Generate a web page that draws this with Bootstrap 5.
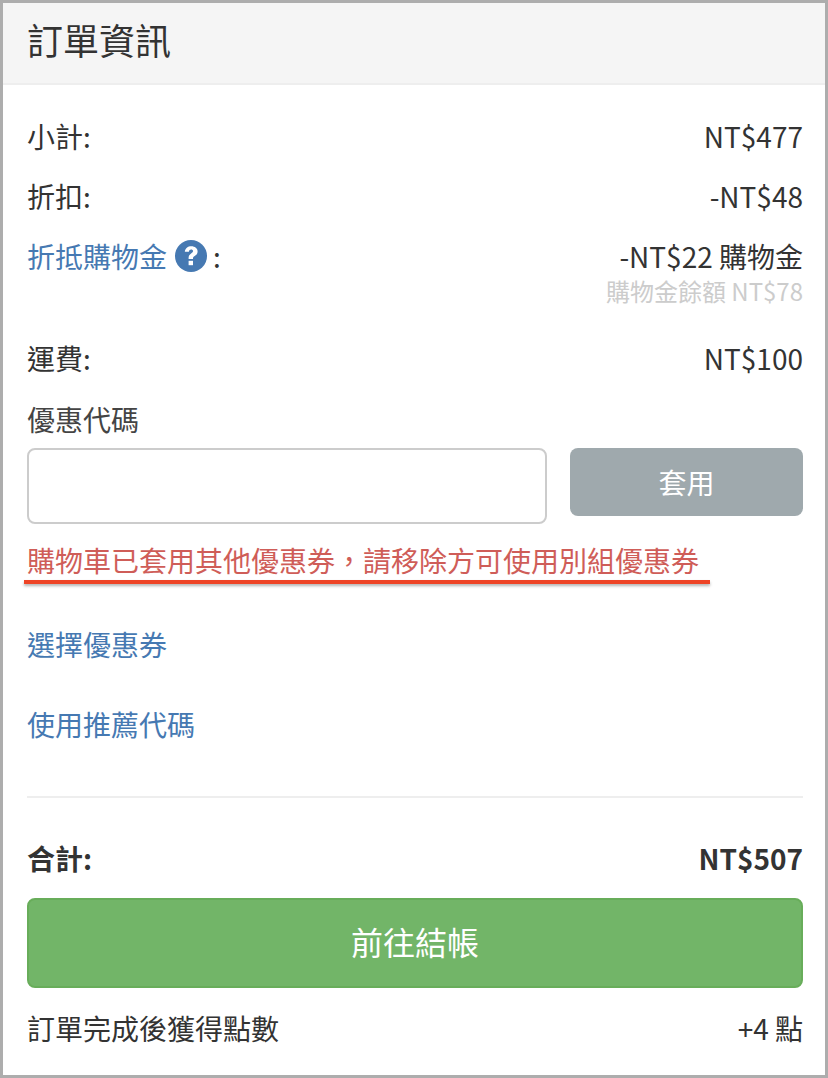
<!DOCTYPE html>
<html lang="zh-Hant">
<head>
<meta charset="utf-8">
<title>訂單資訊</title>
<link rel="stylesheet" href="https://cdn.jsdelivr.net/npm/bootstrap@5.3.0/dist/css/bootstrap.min.css">
<style>
html,body{height:100%;}
body{margin:0;background:#fff;color:#333;font-family:"Noto Sans CJK TC",sans-serif;font-size:28px;line-height:40px;}
.frame{width:828px;height:1078px;border:3px solid #adadad;overflow:hidden;background:#fff;}
.panel-head{height:82px;background:#f5f5f5;border-bottom:2px solid #eee;padding:0 24px;font-size:36px;line-height:72px;}
.panel-main{padding:31px 22px 0 24px;}
.sum-row{height:60px;}
.sum-row-tall{height:102px;}
.sum-row-last{height:61px;}
.link-blue{color:#4679b2;text-decoration:none;}
.q-icon{width:32px;height:32px;margin:0 6px 0 8px;vertical-align:-4px;}
.note{font-size:24px;line-height:30px;color:#ccc;font-weight:400;}
.code-label{color:#444;margin-bottom:9px;}
.code-input{width:520px;height:76px;border:2px solid #ccc;border-radius:8px;background:#fff;}
.code-btn{width:233px;height:68px;background:#9fa9ad;color:#fff;border:0;border-radius:8px;font-size:28px;}
.warn{color:#cf5d58;margin-top:16px;height:41px;}
.warn-mark{height:4px;width:686px;margin-left:-3px;margin-top:-1px;background:#ee4426;box-shadow:0 2px 3px rgba(0,0,0,.3);}
.pick-a{margin-top:40px;}
.pick-b{margin-top:40px;}
.rule{height:2px;background:#eee;margin-top:52px;}
.total{margin-top:40px;font-weight:700;}
.go-btn{display:block;width:776px;height:90px;margin-top:20px;padding-bottom:5px;background:#72b568;border:2px solid #68ad5a;border-radius:8px;color:#fff;font-size:32px;line-height:1;}
.earn{margin-top:20px;}
</style>
</head>
<body>
<div class="frame">
  <div class="panel-head">訂單資訊</div>
  <div class="panel-main">
    <div class="sum-row d-flex justify-content-between"><span>小計:</span><span>NT$477</span></div>
    <div class="sum-row d-flex justify-content-between"><span>折扣:</span><span>-NT$48</span></div>
    <div class="sum-row-tall d-flex justify-content-between">
      <span><a class="link-blue" href="#">折抵購物金</a><svg class="q-icon" viewBox="0 0 32 32" aria-hidden="true"><circle cx="16" cy="16" r="16" fill="#4679b2"/><path d="M9.800 11.800c.4-3.500 3-5.500 6.500-5.500 3.600 0 6.300 2.200 6.300 5.200 0 2.200-1.200 3.400-2.900 4.500-1.200.8-1.700 1.300-1.700 2.400v.5h-4.400v-1c0-2.200.9-3.400 2.500-4.500 1.300-.9 2-1.400 2-2.300 0-1-.9-1.700-2-1.700-1.200 0-2 .8-2.200 2.300z" fill="#fff"/><rect x="13.600" y="20.800" width="4.400" height="4.400" fill="#fff"/></svg>:</span>
      <span class="text-end d-block">-NT$22 購物金<div class="note">購物金餘額 NT$78</div></span>
    </div>
    <div class="sum-row-last d-flex justify-content-between"><span>運費:</span><span>NT$100</span></div>
    <div class="code-label">優惠代碼</div>
    <div class="d-flex justify-content-between align-items-start">
      <input class="code-input" type="text" aria-label="優惠代碼">
      <button class="code-btn" type="button">套用</button>
    </div>
    <div class="warn">購物車已套用其他優惠券，請移除方可使用別組優惠券</div>
    <div class="warn-mark"></div>
    <div class="pick-a"><a class="link-blue" href="#">選擇優惠券</a></div>
    <div class="pick-b"><a class="link-blue" href="#">使用推薦代碼</a></div>
    <div class="rule"></div>
    <div class="total d-flex justify-content-between"><span>合計:</span><span>NT$507</span></div>
    <button class="go-btn" type="button">前往結帳</button>
    <div class="earn d-flex justify-content-between"><span>訂單完成後獲得點數</span><span>+4 點</span></div>
  </div>
</div>
<script src="https://cdn.jsdelivr.net/npm/bootstrap@5.3.0/dist/js/bootstrap.bundle.min.js"></script>
</body>
</html>
